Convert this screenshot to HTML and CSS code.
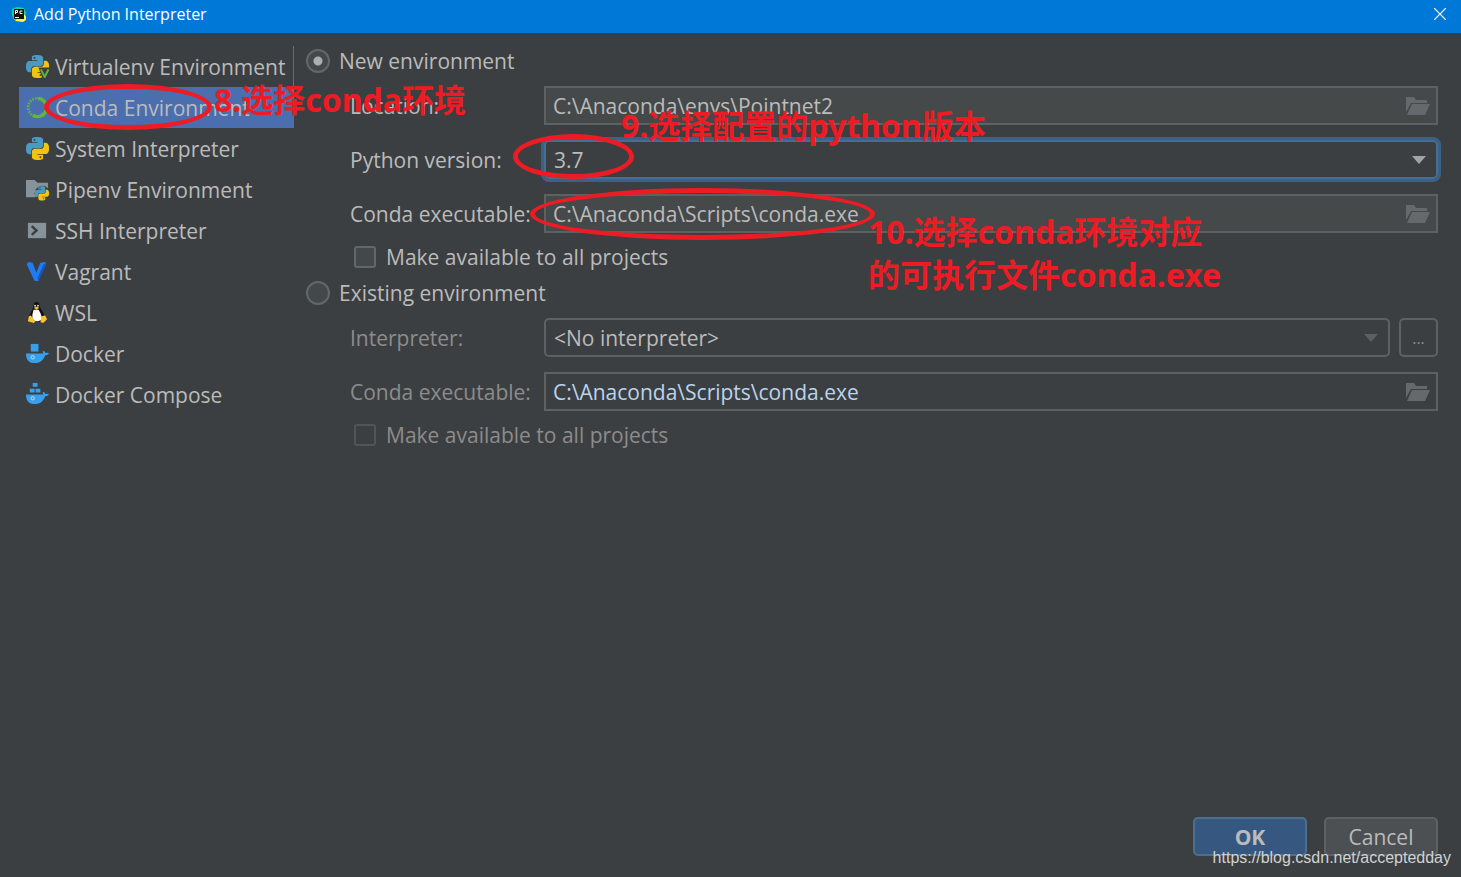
FILE: index.html
```html
<!DOCTYPE html>
<html lang="en">
<head>
    <meta charset="UTF-8">
    <meta name="viewport" content="width=device-width, initial-scale=1.0">
    <title>Add Python Interpreter</title>
    <link rel="stylesheet" href="styles.css">
</head>
<body>

    <!-- Shared icons -->
    <svg class="sprite" width="0" height="0" aria-hidden="true">
        <symbol id="python" viewBox="0 0 24 24">
            <path id="snake" fill="#4a9bc4" d="M14.25.18l.9.2.73.26.59.3.45.32.34.34.25.34.16.33.1.3.04.26.02.2-.01.13V8.5l-.05.63-.13.55-.21.46-.26.38-.3.31-.33.25-.35.19-.35.14-.33.1-.3.07-.26.04-.21.02H8.77l-.69.05-.59.14-.5.22-.41.27-.33.32-.27.35-.2.36-.15.37-.1.35-.07.32-.04.27-.02.21v3.06H3.17l-.21-.03-.28-.07-.32-.12-.35-.18-.36-.26-.36-.36-.35-.46-.32-.59-.28-.73-.21-.88-.14-1.05-.05-1.23.06-1.22.16-1.04.24-.87.32-.71.36-.57.4-.44.42-.33.42-.24.4-.16.36-.1.32-.05.24-.01h.16l.06.01h8.16v-.83H6.18l-.01-2.75-.02-.37.05-.34.11-.31.17-.28.25-.26.31-.23.38-.2.44-.18.51-.15.58-.12.64-.1.71-.06.77-.04.84-.02 1.27.05z"/>
            <circle cx="8.900" cy="3" r="1" fill="#3c3f41"/>
            <path fill="#f2c40f" transform="rotate(180 12 12)" d="M14.25.18l.9.2.73.26.59.3.45.32.34.34.25.34.16.33.1.3.04.26.02.2-.01.13V8.5l-.05.63-.13.55-.21.46-.26.38-.3.31-.33.25-.35.19-.35.14-.33.1-.3.07-.26.04-.21.02H8.77l-.69.05-.59.14-.5.22-.41.27-.33.32-.27.35-.2.36-.15.37-.1.35-.07.32-.04.27-.02.21v3.06H3.17l-.21-.03-.28-.07-.32-.12-.35-.18-.36-.26-.36-.36-.35-.46-.32-.59-.28-.73-.21-.88-.14-1.05-.05-1.23.06-1.22.16-1.04.24-.87.32-.71.36-.57.4-.44.42-.33.42-.24.4-.16.36-.1.32-.05.24-.01h.16l.06.01h8.16v-.83H6.18l-.01-2.75-.02-.37.05-.34.11-.31.17-.28.25-.26.31-.23.38-.2.44-.18.51-.15.58-.12.64-.1.71-.06.77-.04.84-.02 1.27.05z"/>
            <circle cx="15.100" cy="21" r="1" fill="#3c3f41"/>
        </symbol>
        <symbol id="folder" viewBox="0 0 24 18">
            <path fill="#65696b" d="M0 0h8l2 3h11v3H5L0 15z"/>
            <path fill="#65696b" d="M6 7h18l-5 11H1z"/>
        </symbol>
        <symbol id="whale" viewBox="0 0 24 13">
            <path fill="#389fed" d="M0 3h18c0-1-1-2 0-3 1 0 2 1 2 2.500 1-.5 3-.5 4 .2-.6 1.300-2 2-4 2C18 10 15 13 9 13 3 13 0 10 0 3z"/>
            <circle cx="7" cy="7" r="1.700" fill="none" stroke="#c4e0f4"/>
        </symbol>
    </svg>

    <header class="titlebar">
        <svg class="app-icon" viewBox="0 0 16 16" aria-hidden="true">
            <path fill="#21d789" d="M1 3l5-2 7 1 2 5-3 8-9-1-2-5z"/>
            <path fill="#fcf84a" d="M11 7l4 3v4l-3 2-8-1z"/>
            <path fill="#07c3f2" d="M1 5l2-3 3 1-3 7z"/>
            <path fill="#111" d="M3 3h10v10H3z"/>
            <path fill="none" stroke="#fff" d="M4.500 8V4.500h2v2h-2M11.500 5h-2.500v2.500h2.500M4 11.500h4"/>
        </svg>
        <h1 class="title">Add Python Interpreter</h1>
        <button class="close" type="button" aria-label="Close">
            <svg viewBox="0 0 12 12" width="12" height="12"><path fill="none" stroke="#fff" stroke-width="1.200" d="M0 0l12 12M12 0L0 12"/></svg>
        </button>
    </header>

    <main class="dialog">
        <nav class="sidebar">
            <ul class="env-list">
                <li class="env first"><a href="#virtualenv">
                    <svg class="icon" viewBox="0 0 24 24"><use href="#python"/><path fill="#3c3f41" d="M13 13h11v11H17z"/><path fill="none" stroke="#62b543" stroke-width="2" d="M15.500 15l4 8 4-8"/></svg>
                    Virtualenv Environment</a></li>
                <li class="env selected"><a href="#conda">
                    <svg class="icon" viewBox="0 0 24 24"><path fill="none" stroke="#62b543" stroke-width="3.500" d="M12 2.500a9.500 9.500 0 1 1-5 17.600"/><path fill="none" stroke="#62b543" stroke-width="3" stroke-dasharray="1.500 1.500" d="M6 19.500A9.500 9.500 0 0 1 11 2.500"/></svg>
                    Conda Environment</a></li>
                <li class="env"><a href="#system">
                    <svg class="icon" viewBox="0 0 24 24"><use href="#python"/></svg>
                    System Interpreter</a></li>
                <li class="env"><a href="#pipenv">
                    <svg class="icon" viewBox="0 0 24 24"><path fill="#87939a" d="M0 2h9l3 3h11v15H0z"/><circle cx="17" cy="16" r="8" fill="#3c3f41"/><use href="#python" x="9" y="8" width="15" height="16"/></svg>
                    Pipenv Environment</a></li>
                <li class="env"><a href="#ssh">
                    <svg class="icon" viewBox="0 0 24 24"><path fill="#87939a" d="M2 4h19v16H2z"/><path fill="none" stroke="#3c3f41" stroke-width="2.500" d="M6 7.500l5 4.500-5 4.500"/></svg>
                    SSH Interpreter</a></li>
                <li class="env"><a href="#vagrant">
                    <svg class="icon" viewBox="0 0 24 24"><path fill="#1259c4" d="M21 3l-2-1-4 1-5 12v7h3l8-17z"/><path fill="#1f7cf5" d="M1 3l3-1 3 1 4 11 2 8H9L1 5z"/><path fill="#1f7cf5" d="M15 3l4-1 2 1-3 2-6 14-2-4z"/></svg>
                    Vagrant</a></li>
                <li class="env"><a href="#wsl">
                    <svg class="icon" viewBox="0 0 24 24"><path fill="#111" d="M8 4c0-4 6-4 6 0 0 4 6 8 5 14l-4 4H7l-4-5c1-5 5-8 5-13z"/><path fill="#fff" d="M8 9h5c2 3 4 7 3 10-2 3-7 3-9 0-1-3 0-7 1-10z"/><circle cx="9.500" cy="5" r="1" fill="#ddd"/><circle cx="12.500" cy="5" r="1" fill="#ddd"/><path fill="#f9c52c" d="M8 7l3-1 3 1-3 2zM3 16l2-1 5 6-2 2-6-2zM20 15l-4 1-1 6 3 1 4-4z"/></svg>
                    WSL</a></li>
                <li class="env"><a href="#docker">
                    <svg class="icon" viewBox="0 0 24 24"><path fill="#389fed" d="M5 2h8v8H5z"/><use href="#whale" y="9" width="24" height="13"/></svg>
                    Docker</a></li>
                <li class="env"><a href="#compose">
                    <svg class="icon" viewBox="0 0 24 24"><path fill="#389fed" d="M7 0h5v4H7zM4 6h5v4H4zM10 6h5v4h-5z"/><use href="#whale" y="9" width="24" height="13"/></svg>
                    Docker Compose</a></li>
            </ul>
        </nav>

        <form class="settings">
            <section class="group">
                <label class="option"><input type="radio" name="env" checked>New environment</label>
                <div class="fields">
                    <label for="location">Location:</label>
                    <div class="field">
                        <input id="location" type="text" value="C:\Anaconda\envs\Pointnet2">
                        <button class="browse" type="button" aria-label="Browse location"><svg><use href="#folder"/></svg></button>
                    </div>
                    <label for="version">Python version:</label>
                    <div class="combo focused">
                        <select id="version"><option>3.7</option></select>
                    </div>
                    <label for="conda-new">Conda executable:</label>
                    <div class="field">
                        <input id="conda-new" type="text" value="C:\Anaconda\Scripts\conda.exe">
                        <button class="browse" type="button" aria-label="Browse conda"><svg><use href="#folder"/></svg></button>
                    </div>
                </div>
                <label class="option share"><input type="checkbox">Make available to all projects</label>
            </section>

            <section class="group existing">
                <label class="option"><input type="radio" name="env">Existing environment</label>
                <div class="fields">
                    <label for="interpreter">Interpreter:</label>
                    <div class="row">
                        <div class="combo">
                            <select id="interpreter"><option>&lt;No interpreter&gt;</option></select>
                        </div>
                        <button class="more" type="button">...</button>
                    </div>
                    <label for="conda-old">Conda executable:</label>
                    <div class="field">
                        <input id="conda-old" type="text" value="C:\Anaconda\Scripts\conda.exe">
                        <button class="browse" type="button" aria-label="Browse conda"><svg><use href="#folder"/></svg></button>
                    </div>
                </div>
                <label class="option share"><input type="checkbox">Make available to all projects</label>
            </section>
        </form>
    </main>

    <footer class="actions">
        <button class="btn primary" type="button">OK</button>
        <button class="btn" type="button">Cancel</button>
    </footer>

    <!-- Tutorial notes over the dialog -->
    <div class="ring ring-env"></div>
    <div class="ring ring-version"></div>
    <div class="ring ring-conda"></div>
    <p class="note note-env" lang="zh">8.选择conda环境</p>
    <p class="note note-version" lang="zh">9.选择配置的python版本</p>
    <p class="note note-conda" lang="zh">10.选择conda环境对应<br>的可执行文件conda.exe</p>
    <p class="watermark">https://blog.csdn.net/acceptedday</p>

</body>
</html>
```
FILE: styles.css
```css
* {
    box-sizing: border-box;
}

body {
    position: relative;
    display: flex;
    flex-direction: column;
    min-height: 100vh;
    margin: 0;
    background-color: #3c3f41;
    color: #bbbbbb;
    font-family: "Open Sans", "Noto Sans CJK SC", sans-serif;
    font-size: 21px;
    line-height: 30px;
}

input, select, button {
    font: inherit;
    color: inherit;
}

.sprite {
    position: absolute;
}

/* Title bar */
.titlebar {
    display: flex;
    align-items: center;
    height: 33px;
    padding: 0 15px 5px 11px;
    background-color: #0078d7;
    color: #fff;
}

.app-icon {
    width: 16px;
    height: 16px;
    margin-right: 7px;
}

.title {
    flex-grow: 1;
    margin: 0;
    font-size: 16px;
    font-weight: 400;
}

.close {
    display: flex;
    padding: 0;
    border: 0;
    background: none;
}

/* Sidebar */
.dialog {
    display: flex;
    flex-grow: 1;
    gap: 12px;
    padding: 13px 23px 0 19px;
}

.sidebar {
    flex: 0 0 275px;
}

.env-list {
    list-style: none;
    margin: 0;
    padding: 0;
}

.env a {
    display: flex;
    align-items: center;
    gap: 6px;
    height: 41px;
    padding-left: 7px;
    color: inherit;
    text-decoration: none;
    white-space: nowrap;
}

.env.first {
    border-right: 1px solid #4b6eaf;
}

.env.selected {
    background-color: #4b6eaf;
}

.icon {
    flex: none;
    width: 23px;
    height: 23px;
}

/* Settings */
.settings {
    flex-grow: 1;
}

.group + .group {
    margin-top: 6px;
}

.option {
    display: flex;
    align-items: center;
    gap: 9px;
}

.option input {
    appearance: none;
    width: 24px;
    height: 24px;
    margin: 0;
    border: 2px solid #636769;
    border-radius: 50%;
    background-color: #43494a;
}

.option input:checked {
    background-image: radial-gradient(circle, #adadad 4px, transparent 5px);
}

.share {
    gap: 10px;
    padding-left: 48px;
}

.share input {
    width: 22px;
    height: 22px;
    border-radius: 3px;
}

.fields {
    display: grid;
    grid-template-columns: 194px 1fr;
    align-items: center;
    row-gap: 15px;
    margin: 10px 0 9px 44px;
}

.row {
    display: flex;
    gap: 9px;
}

.field {
    display: flex;
    align-items: center;
    height: 39px;
    padding: 0 6px 0 7px;
    border: 2px solid #5e6162;
    background-color: #45494a;
}

.field input {
    flex-grow: 1;
    min-width: 0;
    padding: 0;
    border: 0;
    outline: 0;
    background: none;
}

.browse {
    display: flex;
    padding: 0;
    border: 0;
    background: none;
}

.browse svg {
    width: 24px;
    height: 18px;
}

.combo {
    position: relative;
    flex-grow: 1;
    height: 39px;
    border: 2px solid #5e6162;
    border-radius: 5px;
}

.combo select {
    appearance: none;
    width: 100%;
    height: 100%;
    padding: 0 8px;
    border: 0;
    outline: 0;
    background: none;
}

.combo::after {
    content: "";
    position: absolute;
    top: 14px;
    right: 10px;
    border: 7px solid transparent;
    border-top: 8px solid #5e6060;
    border-bottom: 0;
    pointer-events: none;
}

.combo.focused {
    border-color: #466d94;
    box-shadow: 0 0 0 3px #3d6185;
}

.combo.focused::after {
    border-top-color: #a0a4a6;
}

.existing .fields > label,
.existing .share {
    color: #8c8c8c;
}

.existing .field {
    background-color: #3c3f41;
}

.existing .field input {
    color: #bbd3ec;
}

.existing .share input {
    border-color: #525556;
    background-color: #3c3f41;
}

.more {
    width: 39px;
    height: 39px;
    padding: 0;
    border: 2px solid #5e6162;
    border-radius: 5px;
    background: none;
    color: #8c8c8c;
    font-size: 16px;
}

/* Buttons */
.actions {
    display: flex;
    justify-content: flex-end;
    gap: 17px;
    padding: 0 23px 21px;
}

.btn {
    width: 114px;
    height: 39px;
    padding: 0;
    border: 2px solid #5e6162;
    border-radius: 5px;
    background-color: #4c5052;
}

.primary {
    border-color: #4c708c;
    background-color: #365880;
    font-weight: 700;
}

/* Notes */
.ring {
    position: absolute;
    border: 5px solid #ed1c24;
    border-radius: 50%;
}

.ring-env {
    left: 44px;
    top: 84px;
    width: 168px;
    height: 46px;
}

.ring-version {
    left: 513px;
    top: 134px;
    width: 121px;
    height: 45px;
}

.ring-conda {
    left: 530px;
    top: 188px;
    width: 345px;
    height: 52px;
}

.note {
    position: absolute;
    margin: 0;
    color: #ed1c24;
    font-family: "Noto Sans", "Noto Sans CJK SC", sans-serif;
    font-size: 32px;
    font-weight: 700;
    line-height: 43px;
    white-space: nowrap;
}

.note-env {
    left: 214px;
    top: 78px;
}

.note-version {
    left: 621px;
    top: 104px;
}

.note-conda {
    left: 868px;
    top: 210px;
}

.watermark {
    position: absolute;
    right: 10px;
    bottom: 4px;
    margin: 0;
    color: #d0d2d3;
    font-family: "Liberation Sans", sans-serif;
    font-size: 16px;
}
```
